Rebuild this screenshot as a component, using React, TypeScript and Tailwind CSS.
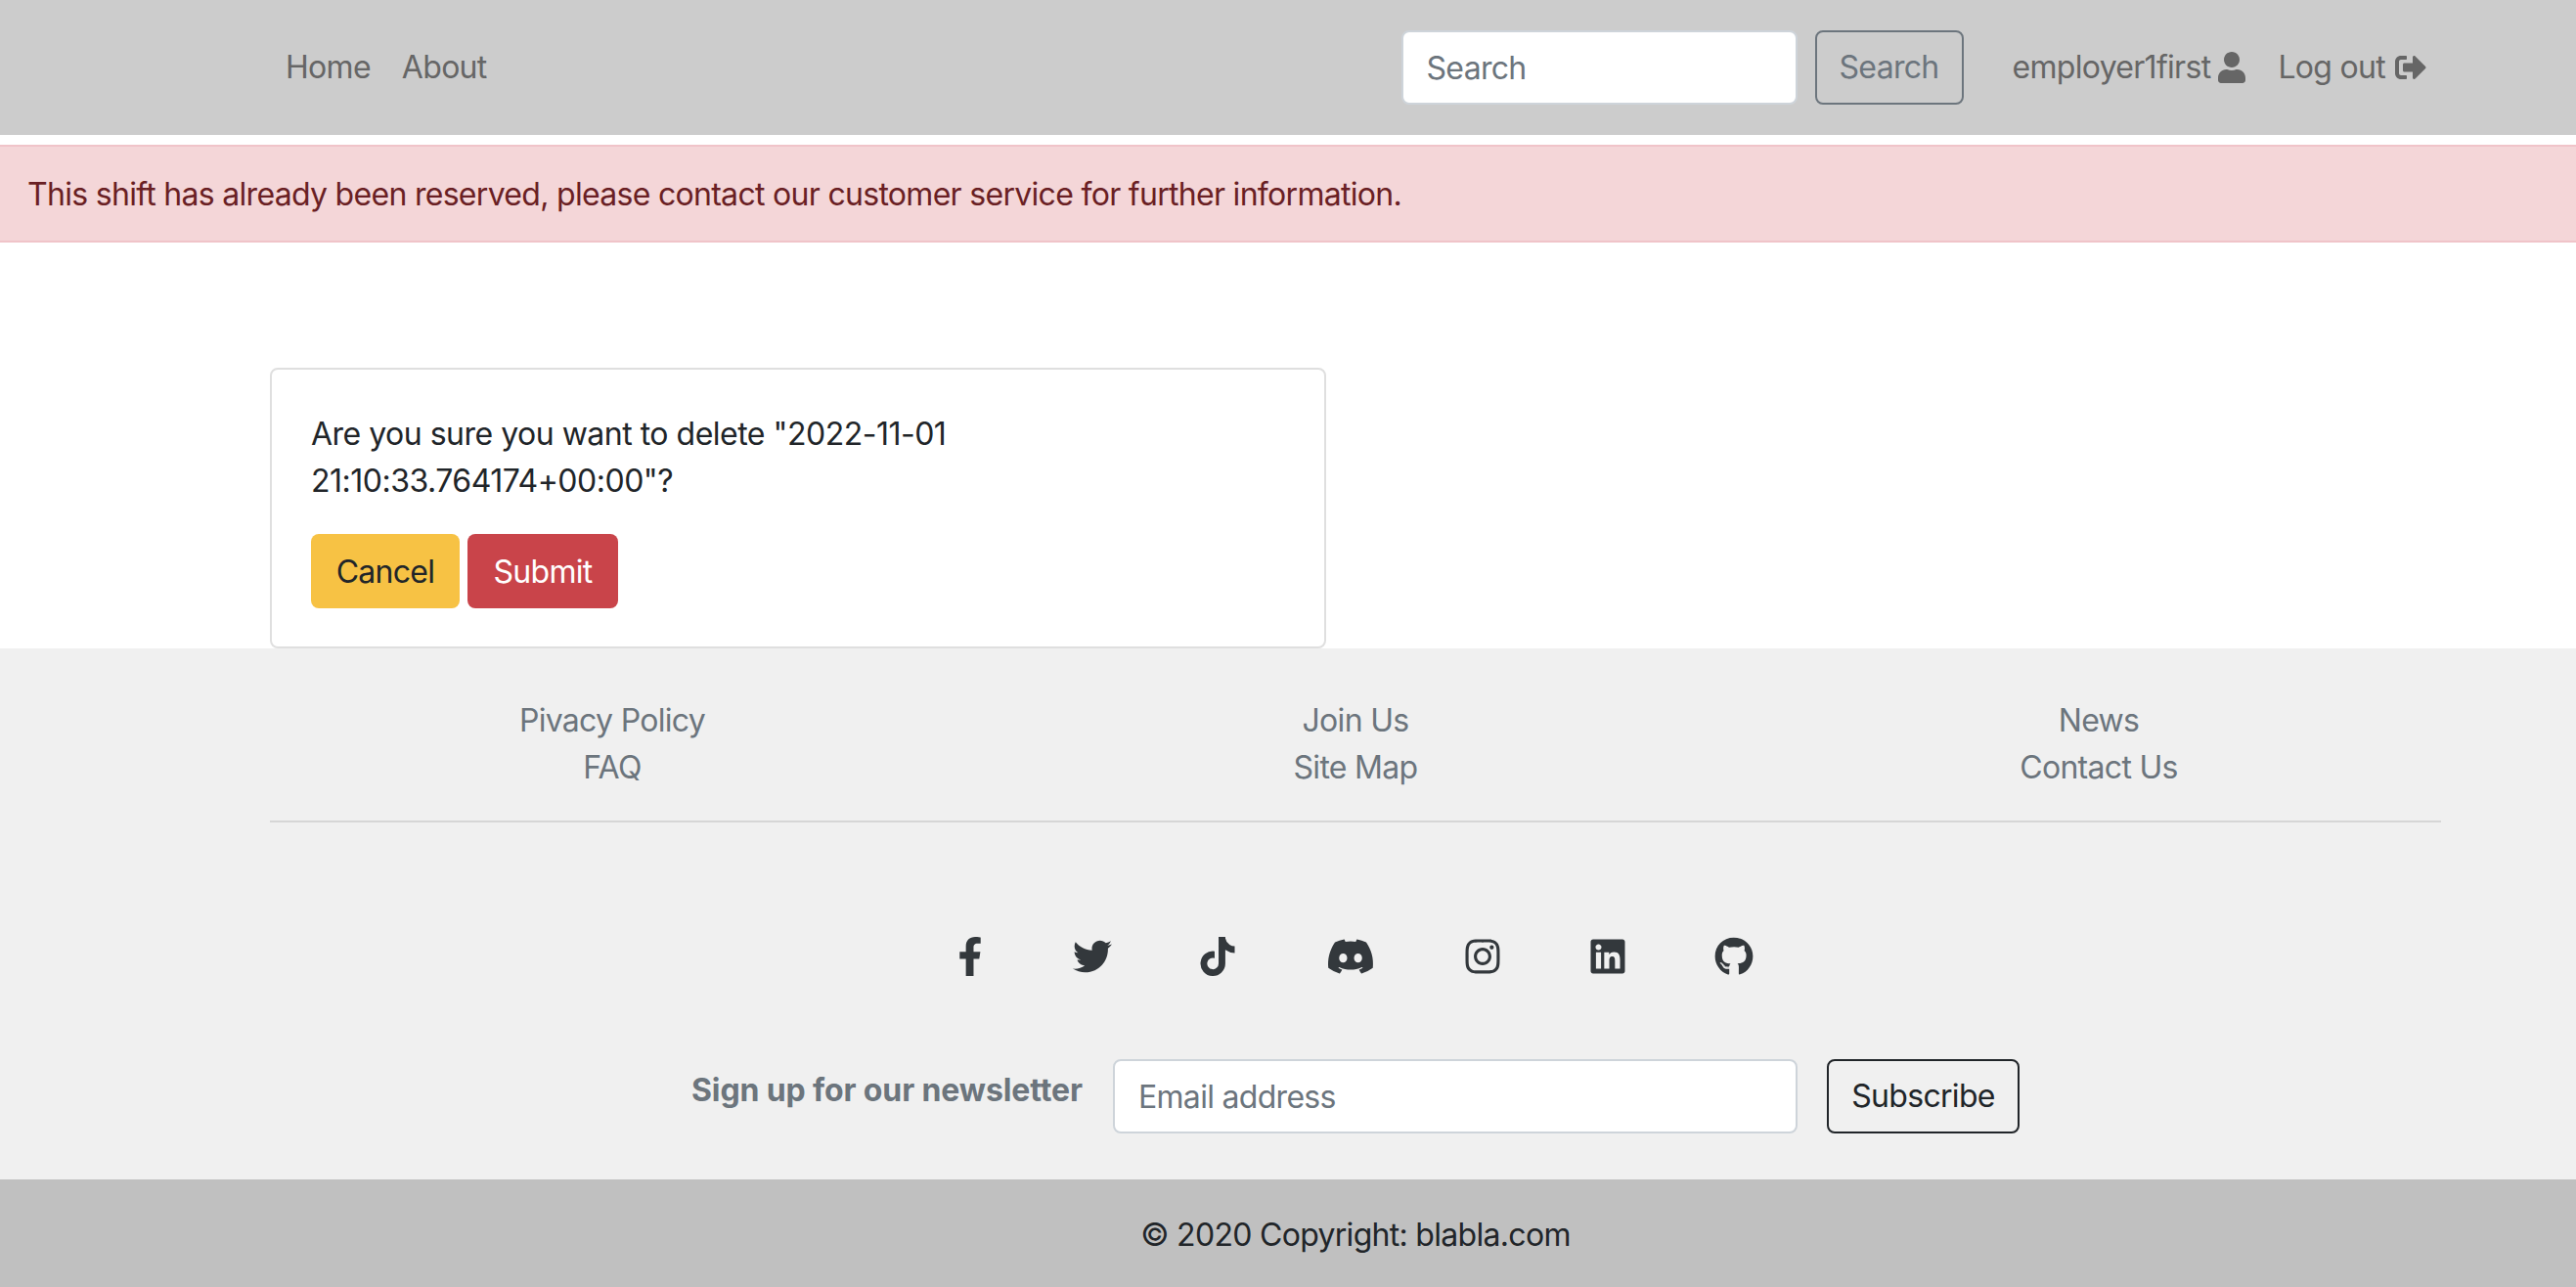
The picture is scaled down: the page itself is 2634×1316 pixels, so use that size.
import { FaDiscord, FaFacebookF, FaGithub, FaInstagram, FaLinkedin, FaSignOutAlt, FaTiktok, FaTwitter, FaUser } from "react-icons/fa";

const footerColumns = [
  ["Pivacy Policy", "FAQ"],
  ["Join Us", "Site Map"],
  ["News", "Contact Us"],
];

const socialIcons = [
  { icon: FaFacebookF, cls: "w-[26px] h-[40px]" },
  { icon: FaTwitter, cls: "w-[40px] h-[40px] ml-[92px]" },
  { icon: FaTiktok, cls: "w-[36px] h-[40px] ml-[90px]" },
  { icon: FaDiscord, cls: "w-[50px] h-[40px] ml-[93px]" },
  { icon: FaInstagram, cls: "w-[36px] h-[40px] ml-[92px]" },
  { icon: FaLinkedin, cls: "w-[36px] h-[40px] ml-[92px]" },
  { icon: FaGithub, cls: "w-[40px] h-[40px] ml-[91px]" },
];

export default function App() {
  return (
    <div className="min-h-[1316px] bg-white font-['Inter',sans-serif] text-[32px] leading-[48px] tracking-[-0.7px] text-[#212529]">
      {/* Navbar */}
      <nav className="h-[138px] bg-[#cccccc] pl-[292px] pr-[153px] flex items-center text-[#666666]">
        <a>Home</a>
        <a className="ml-[32px]">About</a>
        <form className="ml-auto flex items-center">
          <input
            placeholder="Search"
            className="w-[405px] h-[76px] px-[24px] bg-white rounded-[8px] border-2 border-[#ced4da] placeholder:text-[#6c757d] outline-none"
          />
          <button className="ml-[18px] w-[152px] h-[76px] rounded-[8px] border-2 border-[#6c757d] text-[#6c757d]">Search</button>
        </form>
        <a className="ml-[50px] flex items-center gap-[8px]">
          employer1first
          <FaUser className="w-[28px] h-[32px]" />
        </a>
        <a className="ml-[33px] flex items-center gap-[10px]">
          Log out
          <FaSignOutAlt className="w-[32px] h-[32px]" />
        </a>
      </nav>

      {/* Alert */}
      <div className="mt-[10px] h-[100px] px-[28px] pt-[2px] flex items-center bg-[#f4d6d8] border-y-2 border-[#f0c4c9] text-[#6a1f24]">
        This shift has already been reserved, please contact our customer service for further information.
      </div>

      {/* Delete confirmation */}
      <main className="pt-[128px] pl-[276px]">
        <div className="w-[1080px] h-[287px] rounded-[8px] border-2 border-[#dfdfdf] px-[40px] pt-[42px] bg-white">
          <p className="tracking-[-0.5px]">
            Are you sure you want to delete "2022-11-01
            <br />
            21:10:33.764174+00:00"?
          </p>
          <div className="mt-[30px] flex gap-[8px]">
            <button className="w-[152px] h-[76px] pt-[2px] rounded-[8px] bg-[#f7c244] text-[#212529]">Cancel</button>
            <button className="w-[154px] h-[76px] pt-[2px] rounded-[8px] bg-[#c9444a] text-white">Submit</button>
          </div>
        </div>
      </main>

      {/* Footer */}
      <footer className="bg-[#f0f0f0]">
        <div className="ml-[276px] mr-[138px] h-[178px] pt-[50px] border-b-2 border-[#d6d6d6]">
          <div className="-mx-[30px] grid grid-cols-3 text-center text-[#6c757d]">
            {footerColumns.map((links) => (
              <div key={links[0]} className="flex flex-col">
                {links.map((link) => (
                  <a key={link}>{link}</a>
                ))}
              </div>
            ))}
          </div>
        </div>
        <div className="h-[365px] ml-[276px] mr-[138px] flex flex-col items-center">
          <div className="mt-[117px] h-[40px] flex items-center text-[#33383c]">
            {socialIcons.map(({ icon: Icon, cls }, idx) => (
              <Icon key={idx} className={cls} />
            ))}
          </div>
          <form className="mt-[85px] flex items-start">
            <label className="w-[400px] font-bold tracking-[-0.12px] text-[#6c757d] mr-[31px] mt-[8px] whitespace-nowrap">Sign up for our newsletter</label>
            <input
              placeholder="Email address"
              className="w-[700px] h-[76px] px-[24px] bg-white rounded-[8px] border-2 border-[#ced4da] placeholder:text-[#6c757d] outline-none"
            />
            <button className="ml-[30px] w-[197px] h-[76px] rounded-[8px] border-2 border-[#212529] text-[#212529]">Subscribe</button>
          </form>
        </div>
      </footer>

      <div className="h-[111px] pl-[276px] pr-[138px] pt-[2px] bg-[#c0c0c0] flex items-center justify-center text-[#212529]">© 2020 Copyright: blabla.com</div>
    </div>
  );
}
